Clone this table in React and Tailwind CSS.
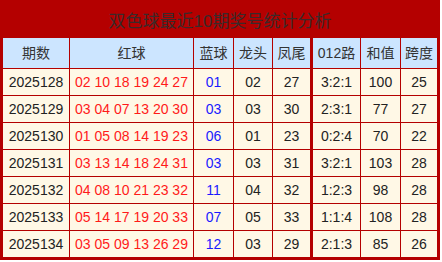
import React from "react";

const rows = [
  ["2025128", "02 10 18 19 24 27", "01", "02", "27", "3:2:1", "100", "25"],
  ["2025129", "03 04 07 13 20 30", "03", "03", "30", "2:3:1", "77", "27"],
  ["2025130", "01 05 08 14 19 23", "06", "01", "23", "0:2:4", "70", "22"],
  ["2025131", "03 13 14 18 24 31", "03", "03", "31", "3:2:1", "103", "28"],
  ["2025132", "04 08 10 21 23 32", "11", "04", "32", "1:2:3", "98", "28"],
  ["2025133", "05 14 17 19 20 33", "07", "05", "33", "1:1:4", "108", "28"],
  ["2025134", "03 05 09 13 26 29", "12", "03", "29", "2:1:3", "85", "26"],
];

const headers = ["期数", "红球", "蓝球", "龙头", "凤尾", "012路", "和值", "跨度"];

const grid = "grid grid-cols-[66px_124px_40px_39px_38px_50px_40px_37px]";
const cellBorder = [
  "",
  "border-l border-[#b40000]",
  "border-l border-[#b40000]",
  "border-l border-[#b40000]",
  "border-l border-[#b40000]",
  "border-l-[3px] border-[#b40000]",
  "border-l border-[#b40000]",
  "border-l border-[#b40000]",
];

const App = () => {
  return (
    <div
      className="w-[440px] h-[260px] border-[3px] border-[#b40000] bg-[#b40000] flex flex-col"
      style={{ fontFamily: '"Liberation Sans", "Noto Sans CJK SC", sans-serif' }}
    >
      <div className="h-[35px] flex items-center justify-center text-[17px] text-[#3a2a2a] pt-[2px]">
        双色球最近10期奖号统计分析
      </div>
      <div className={`${grid} h-[30px] bg-[#cce5ff] text-[14px] text-[#333]`}>
        {headers.map((h, i) => (
          <div key={h} className={`flex items-center justify-center ${cellBorder[i]}`}>
            {h}
          </div>
        ))}
      </div>
      {rows.map((r) => (
        <div
          key={r[0]}
          className={`${grid} h-[27px] border-t border-[#b40000] bg-[#fff8e6] text-[14px] text-[#222]`}
        >
          {r.map((v, i) => (
            <div
              key={i}
              className={`flex items-center justify-center ${cellBorder[i]} ${
                i === 1 ? "text-[#ff1a1a]" : i === 2 ? "text-[#1a1aff]" : ""
              }`}
            >
              {v}
            </div>
          ))}
        </div>
      ))}
    </div>
  );
};

export default App;
